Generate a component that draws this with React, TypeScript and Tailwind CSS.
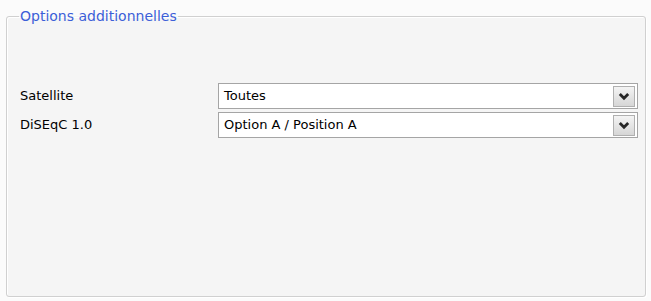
import { useState } from "react";

type ComboProps = {
  value: string;
};

function Chevron() {
  return (
    <svg width="12" height="9" viewBox="0 0 12 9">
      <path d="M1.8 2 L6 6.2 L10.2 2" fill="none" stroke="#262626" strokeWidth="2.8" />
    </svg>
  );
}

function Combo({ value }: ComboProps) {
  return (
    <div className="flex h-[26px] w-[420px] items-center border border-[#a5a5a5] bg-white pl-[5px] pr-[2px]">
      <span className="flex-1 text-[13px] text-black">{value}</span>
      <div className="flex h-[21px] w-[22px] items-center justify-center border border-[#b0b0b0] bg-gradient-to-b from-[#f4f4f4] to-[#d6d6d6]">
        <Chevron />
      </div>
    </div>
  );
}

export default function App() {
  const [rows] = useState([
    { label: "Satellite", value: "Toutes" },
    { label: "DiSEqC 1.0", value: "Option A / Position A" },
  ]);

  return (
    <div
      className="h-[301px] w-[651px] bg-[#fbfbfb] px-[6px] pt-[7px]"
      style={{ fontFamily: "Tahoma, 'DejaVu Sans', sans-serif" }}
    >
      <fieldset className="h-[290px] rounded-[3px] border border-[#d0d0d0] bg-[#f5f5f5] pl-[13px] pr-[7px] shadow-[inset_1px_1px_0_#ffffff,1px_1px_0_#ffffff]">
        <legend className="ml-[-1px] px-[1px] text-[14px] leading-[18px] text-[#3c5fd8]">
          Options additionnelles
        </legend>
        <div className="mt-[58px] flex flex-col gap-[3px]">
          {rows.map((row) => (
            <div key={row.label} className="flex items-center">
              <span className="w-[198px] text-[13px] text-black">{row.label}</span>
              <Combo value={row.value} />
            </div>
          ))}
        </div>
      </fieldset>
    </div>
  );
}
